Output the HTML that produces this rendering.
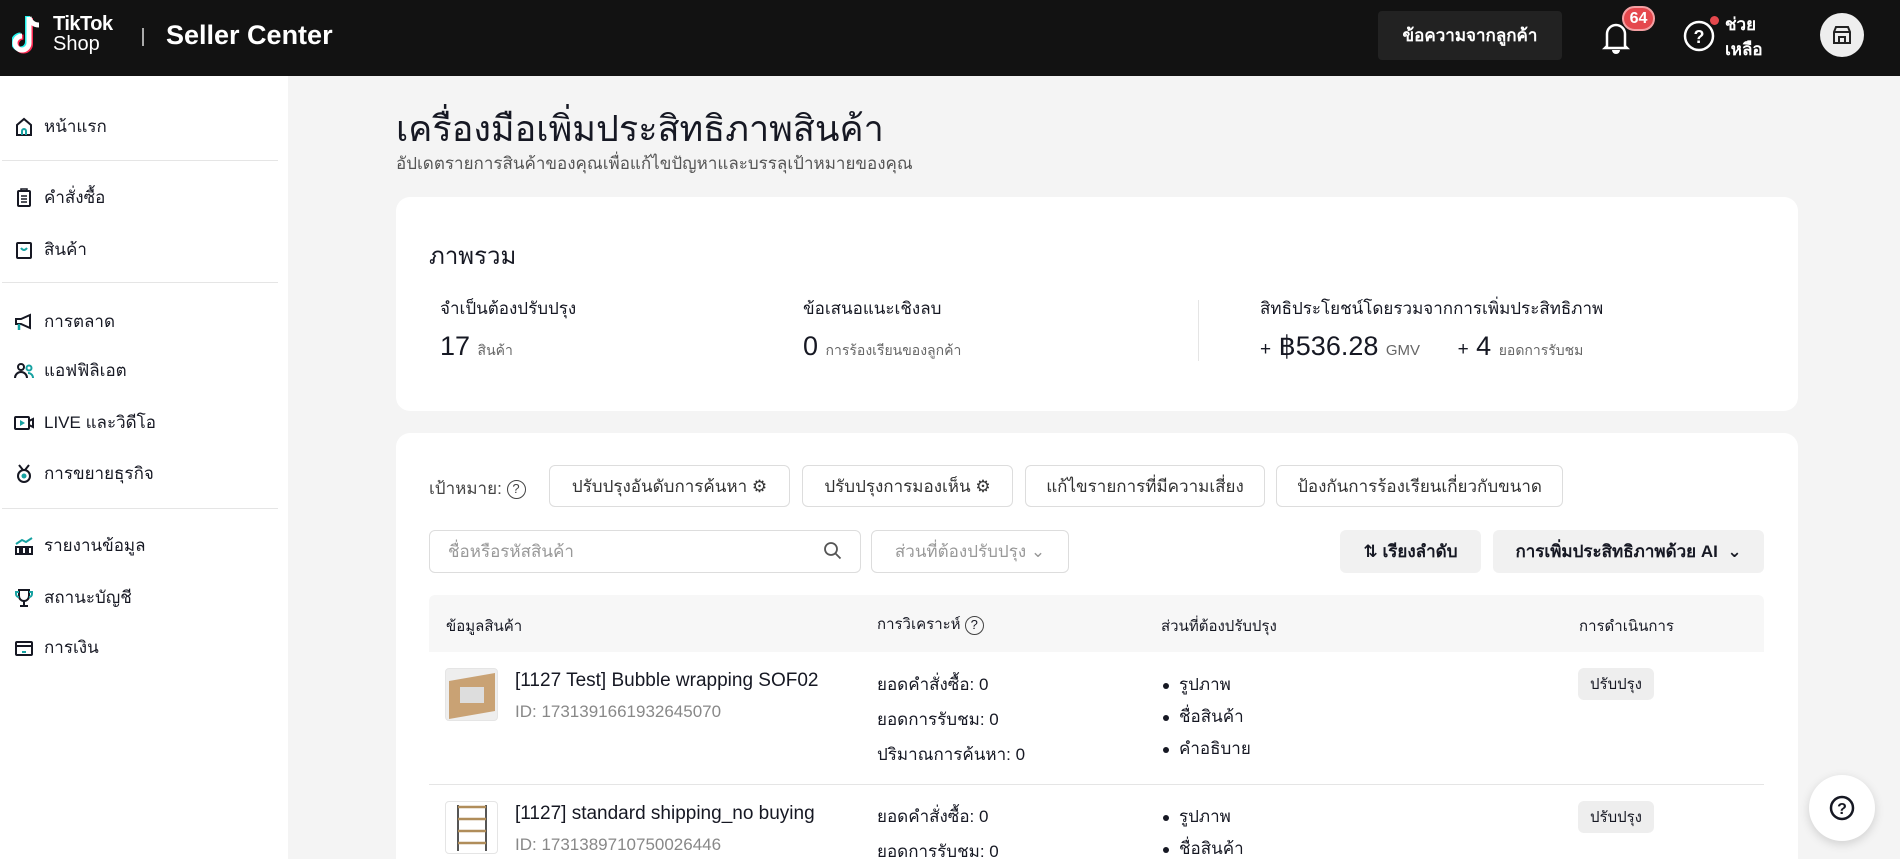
<!DOCTYPE html>
<html style="width:1900px;height:859px;overflow:hidden"><head><meta charset="utf-8">
<style>
*{box-sizing:border-box;margin:0;padding:0}
body{width:1900px;height:859px;overflow:hidden;background:#f4f4f4;font-family:"Liberation Sans","DejaVu Sans",sans-serif;color:#161823;position:relative}
.a{position:absolute;white-space:nowrap}
.hdr{position:absolute;left:0;top:0;width:1900px;height:76px;background:#121212}
.side{position:absolute;left:0;top:76px;width:288px;height:783px;background:#fff}
.si{position:absolute;left:14px;font-size:17px;display:flex;align-items:center;gap:10px}
.si svg{width:20px;height:20px}
.sd{position:absolute;left:2px;width:276px;height:1px;background:#e5e5e5}
.card{position:absolute;background:#fff;border-radius:14px}
.btn{position:absolute;border:1px solid #ddd;border-radius:6px;height:42px;display:flex;align-items:center;justify-content:center;font-size:17px;color:#333;background:#fff}
.gbtn{position:absolute;background:#f1f1f1;border-radius:6px;display:flex;align-items:center;justify-content:center;font-size:17px;color:#161823}
.li{position:absolute;font-size:17px}
.dot::before{content:"";display:inline-block;width:6px;height:6px;border-radius:50%;background:#161823;margin-right:10px;vertical-align:middle}
</style></head><body>
<div class="hdr"></div>
<svg class="a" style="left:12px;top:14px" width="30" height="44" viewBox="0 0 30 44">
<path d="M17 3v26a7 7 0 1 1-7-7" fill="none" stroke="#25f4ee" stroke-width="5" transform="translate(-1.5,-1)"/>
<path d="M17 3v26a7 7 0 1 1-7-7" fill="none" stroke="#fe2c55" stroke-width="5" transform="translate(1.5,1)"/>
<path d="M17 3v26a7 7 0 1 1-7-7M17 3c1 5 5 8 10 8" fill="none" stroke="#fff" stroke-width="5"/>
</svg>
<div class="a" style="left:53px;top:14px;color:#fff;font-size:20px;font-weight:bold;line-height:20px;letter-spacing:-0.5px">TikTok</div>
<div class="a" style="left:53px;top:34px;color:#fff;font-size:20px;line-height:20px">Shop</div>
<div class="a" style="left:142px;top:28px;width:2px;height:18px;background:#aaa"></div>
<div class="a" style="left:166px;top:20px;color:#fff;font-size:27px;font-weight:bold">Seller Center</div>
<div class="a" style="left:1378px;top:11px;width:184px;height:49px;background:#222;border-radius:4px;color:#fff;font-size:17px;font-weight:bold;display:flex;align-items:center;justify-content:center">ข้อความจากลูกค้า</div>
<svg class="a" style="left:1602px;top:20px" width="28" height="34" viewBox="0 0 28 34"><path d="M5 26V14a9 9 0 0 1 18 0v12l2 2H3z" fill="none" stroke="#fff" stroke-width="2.5"/><path d="M10 30h8a4 4 0 0 1-8 0" fill="#fff"/></svg>
<div class="a" style="left:1622px;top:6px;height:25px;min-width:33px;padding:0 5px;background:#e5484d;border:2px solid #f4a0a3;border-radius:13px;color:#fff;font-size:16px;font-weight:bold;line-height:21px;text-align:center">64</div>
<svg class="a" style="left:1682px;top:19px" width="34" height="34" viewBox="0 0 34 34"><circle cx="17" cy="17" r="14" fill="none" stroke="#fff" stroke-width="2.5"/><text x="17" y="24" font-size="18" font-weight="bold" fill="#fff" text-anchor="middle" font-family="Liberation Sans">?</text></svg>
<div class="a" style="left:1710px;top:16px;width:9px;height:9px;border-radius:50%;background:#e5484d"></div>
<div class="a" style="left:1725px;top:12px;color:#fff;font-size:17px;font-weight:bold;line-height:25px">ช่วย<br>เหลือ</div>
<div class="a" style="left:1820px;top:13px;width:44px;height:44px;border-radius:50%;background:#eee"></div>
<svg class="a" style="left:1831px;top:24px" width="22" height="22" viewBox="0 0 22 22"><path d="M3 8l2-5h12l2 5v11H3z M3 8h16 M8 19v-6h6v6" fill="none" stroke="#222" stroke-width="2"/></svg>

<div class="side"></div>
<div class="si" style="top:113px"><svg viewBox="0 0 20 20"><path d="M3 18V8l7-6 7 6v10z" fill="none" stroke="#161823" stroke-width="2"/><path d="M8 18v-4a2 2 0 0 1 4 0v4" fill="none" stroke="#17a2a2" stroke-width="2"/></svg><span>หน้าแรก</span></div>
<div class="sd" style="top:160px"></div>
<div class="si" style="top:184px"><svg viewBox="0 0 20 20"><rect x="4" y="3" width="12" height="15" rx="1" fill="none" stroke="#161823" stroke-width="2"/><path d="M7 3V1h6v2M7 8h6M7 11h6M7 14h6" stroke="#161823" stroke-width="1.5" fill="none"/></svg><span>คำสั่งซื้อ</span></div>
<div class="si" style="top:236px"><svg viewBox="0 0 20 20"><rect x="3" y="3" width="14" height="15" rx="1" fill="none" stroke="#161823" stroke-width="2"/><path d="M7 8q3 4 6 0" fill="none" stroke="#17a2a2" stroke-width="2"/></svg><span>สินค้า</span></div>
<div class="sd" style="top:282px"></div>
<div class="si" style="top:308px"><svg viewBox="0 0 20 20"><path d="M2 7h5l9-4v13l-9-4H2z" fill="none" stroke="#161823" stroke-width="2"/><path d="M5 12v6" stroke="#17a2a2" stroke-width="2.5"/></svg><span>การตลาด</span></div>
<div class="si" style="top:357px"><svg viewBox="0 0 20 20"><circle cx="7" cy="6" r="3" fill="none" stroke="#161823" stroke-width="2"/><path d="M1 17a6 6 0 0 1 12 0" fill="none" stroke="#161823" stroke-width="2"/><circle cx="15" cy="7" r="2.5" fill="none" stroke="#17a2a2" stroke-width="2"/><path d="M14 12a5 5 0 0 1 5 5" fill="none" stroke="#17a2a2" stroke-width="2"/></svg><span>แอฟฟิลิเอต</span></div>
<div class="si" style="top:409px"><svg viewBox="0 0 20 20"><rect x="1" y="4" width="14" height="12" rx="1" fill="none" stroke="#161823" stroke-width="2"/><path d="M15 8l4-2v8l-4-2" fill="none" stroke="#161823" stroke-width="2"/><path d="M6 7v6l5-3z" fill="#17a2a2"/></svg><span>LIVE และวิดีโอ</span></div>
<div class="si" style="top:460px"><svg viewBox="0 0 20 20"><circle cx="10" cy="12" r="6" fill="none" stroke="#161823" stroke-width="2"/><path d="M5 1l4 5M15 1l-4 5" stroke="#161823" stroke-width="2"/><circle cx="10" cy="12" r="2.5" fill="#17a2a2"/></svg><span>การขยายธุรกิจ</span></div>
<div class="sd" style="top:508px"></div>
<div class="si" style="top:532px"><svg viewBox="0 0 20 20"><path d="M2 18v-7h4v7zM8 18v-7h4v7zM14 18v-7h4v7z" fill="none" stroke="#161823" stroke-width="2"/><path d="M2 8l6-4 4 2 6-4" fill="none" stroke="#17a2a2" stroke-width="2"/></svg><span>รายงานข้อมูล</span></div>
<div class="si" style="top:584px"><svg viewBox="0 0 20 20"><path d="M5 2h10v6a5 5 0 0 1-10 0z" fill="none" stroke="#161823" stroke-width="2"/><path d="M10 13v4M6 18h8" stroke="#161823" stroke-width="2"/><path d="M5 4H2v2a3 3 0 0 0 3 3M15 4h3v2a3 3 0 0 1-3 3" fill="none" stroke="#17a2a2" stroke-width="2"/></svg><span>สถานะบัญชี</span></div>
<div class="si" style="top:634px"><svg viewBox="0 0 20 20"><rect x="2" y="4" width="16" height="13" rx="1" fill="none" stroke="#161823" stroke-width="2"/><path d="M2 8h16" stroke="#161823" stroke-width="2"/><path d="M8 14h4" stroke="#17a2a2" stroke-width="2"/></svg><span>การเงิน</span></div>

<div class="a" style="left:396px;top:100px;font-size:36px;color:#161823">เครื่องมือเพิ่มประสิทธิภาพสินค้า</div>
<div class="a" style="left:396px;top:150px;font-size:17px;color:#555">อัปเดตรายการสินค้าของคุณเพื่อแก้ไขปัญหาและบรรลุเป้าหมายของคุณ</div>

<div class="card" style="left:396px;top:197px;width:1402px;height:214px"></div>
<div class="a" style="left:429px;top:236px;font-size:24px">ภาพรวม</div>
<div class="a" style="left:440px;top:295px;font-size:17px">จำเป็นต้องปรับปรุง</div>
<div class="a" style="left:440px;top:331px;font-size:27px">17 <span style="font-size:14px;color:#666">สินค้า</span></div>
<div class="a" style="left:803px;top:295px;font-size:17px">ข้อเสนอแนะเชิงลบ</div>
<div class="a" style="left:803px;top:331px;font-size:27px">0 <span style="font-size:14px;color:#666">การร้องเรียนของลูกค้า</span></div>
<div class="a" style="left:1198px;top:300px;width:1px;height:61px;background:#e5e5e5"></div>
<div class="a" style="left:1260px;top:295px;font-size:17px">สิทธิประโยชน์โดยรวมจากการเพิ่มประสิทธิภาพ</div>
<div class="a" style="left:1260px;top:331px;font-size:27px"><span style="font-size:19px">+</span> ฿536.28 <span style="font-size:15px;color:#666">GMV</span>&nbsp;&nbsp;&nbsp;&nbsp; <span style="font-size:19px">+</span> 4 <span style="font-size:14px;color:#666">ยอดการรับชม</span></div>

<div class="card" style="left:396px;top:433px;width:1402px;height:440px"></div>
<div class="a" style="left:429px;top:475px;font-size:17px;color:#444">เป้าหมาย: <span style="display:inline-block;width:19px;height:19px;border:1.5px solid #444;border-radius:50%;font-size:13px;text-align:center;line-height:16px;vertical-align:middle">?</span></div>
<div class="btn" style="left:549px;top:465px;width:241px">ปรับปรุงอันดับการค้นหา ⚙</div>
<div class="btn" style="left:802px;top:465px;width:211px">ปรับปรุงการมองเห็น ⚙</div>
<div class="btn" style="left:1025px;top:465px;width:240px">แก้ไขรายการที่มีความเสี่ยง</div>
<div class="btn" style="left:1276px;top:465px;width:287px">ป้องกันการร้องเรียนเกี่ยวกับขนาด</div>

<div class="btn" style="left:429px;top:530px;width:432px;height:43px;justify-content:flex-start;padding-left:18px;color:#999">ชื่อหรือรหัสสินค้า</div>
<svg class="a" style="left:823px;top:541px" width="20" height="20" viewBox="0 0 20 20"><circle cx="8" cy="8" r="6" fill="none" stroke="#555" stroke-width="1.8"/><path d="M12.5 12.5l5 5" stroke="#555" stroke-width="1.8"/></svg>
<div class="btn" style="left:871px;top:530px;width:198px;height:43px;color:#999">ส่วนที่ต้องปรับปรุง ⌄</div>
<div class="gbtn" style="left:1340px;top:530px;width:141px;height:43px;font-weight:bold">⇅ เรียงลำดับ</div>
<div class="gbtn" style="left:1493px;top:530px;width:271px;height:43px;font-weight:bold">การเพิ่มประสิทธิภาพด้วย AI&nbsp; ⌄</div>

<div class="a" style="left:429px;top:595px;width:1335px;height:57px;background:#f7f7f7;border-radius:6px 6px 0 0"></div>
<div class="a" style="left:446px;top:614px;font-size:15px">ข้อมูลสินค้า</div>
<div class="a" style="left:877px;top:612px;font-size:15px">การวิเคราะห์ <span style="display:inline-block;width:19px;height:19px;border:1.5px solid #444;border-radius:50%;font-size:13px;text-align:center;line-height:16px">?</span></div>
<div class="a" style="left:1161px;top:614px;font-size:15px">ส่วนที่ต้องปรับปรุง</div>
<div class="a" style="left:1579px;top:614px;font-size:15px">การดำเนินการ</div>

<div class="a" style="left:445px;top:668px;width:53px;height:53px;border:1px solid #e5e5e5;border-radius:4px;overflow:hidden;background:#eee">
<div style="position:absolute;left:3px;top:8px;width:46px;height:38px;background:#c9a274;transform:skewY(-10deg)"></div>
<div style="position:absolute;left:14px;top:18px;width:24px;height:16px;background:#ddd"></div></div>
<div class="li" style="left:515px;top:670px;font-size:19px">[1127 Test] Bubble wrapping SOF02</div>
<div class="li" style="left:515px;top:702px;color:#888">ID: 1731391661932645070</div>
<div class="li" style="left:877px;top:671px">ยอดคำสั่งซื้อ: 0</div>
<div class="li" style="left:877px;top:706px">ยอดการรับชม: 0</div>
<div class="li" style="left:877px;top:741px">ปริมาณการค้นหา: 0</div>
<div class="li dot" style="left:1163px;top:671px">รูปภาพ</div>
<div class="li dot" style="left:1163px;top:703px">ชื่อสินค้า</div>
<div class="li dot" style="left:1163px;top:735px">คำอธิบาย</div>
<div class="gbtn" style="left:1578px;top:668px;width:76px;height:32px;font-size:15px;background:#eee">ปรับปรุง</div>
<div class="a" style="left:429px;top:784px;width:1335px;height:1px;background:#e5e5e5"></div>

<div class="a" style="left:445px;top:801px;width:53px;height:53px;border:1px solid #e5e5e5;border-radius:4px;background:#fff">
<svg width="51" height="51" viewBox="0 0 51 51"><path d="M12 3v46M40 3v46" stroke="#555" stroke-width="2"/><path d="M12 5h28M12 17h28M12 29h28M12 41h28" stroke="#b08d5a" stroke-width="2.5"/></svg></div>
<div class="li" style="left:515px;top:803px;font-size:19px">[1127] standard shipping_no buying</div>
<div class="li" style="left:515px;top:835px;color:#888">ID: 1731389710750026446</div>
<div class="li" style="left:877px;top:803px">ยอดคำสั่งซื้อ: 0</div>
<div class="li" style="left:877px;top:838px">ยอดการรับชม: 0</div>
<div class="li dot" style="left:1163px;top:803px">รูปภาพ</div>
<div class="li dot" style="left:1163px;top:835px">ชื่อสินค้า</div>
<div class="gbtn" style="left:1578px;top:801px;width:76px;height:32px;font-size:15px;background:#eee">ปรับปรุง</div>

<div class="a" style="left:1809px;top:775px;width:66px;height:66px;border-radius:50%;background:#fff;box-shadow:0 3px 10px rgba(0,0,0,.15)"></div>
<svg class="a" style="left:1829px;top:795px" width="26" height="26" viewBox="0 0 26 26"><circle cx="13" cy="13" r="11" fill="none" stroke="#161823" stroke-width="2.5"/><text x="13" y="19" font-size="16" font-weight="bold" fill="#161823" text-anchor="middle" font-family="Liberation Sans">?</text></svg>
</body></html>
